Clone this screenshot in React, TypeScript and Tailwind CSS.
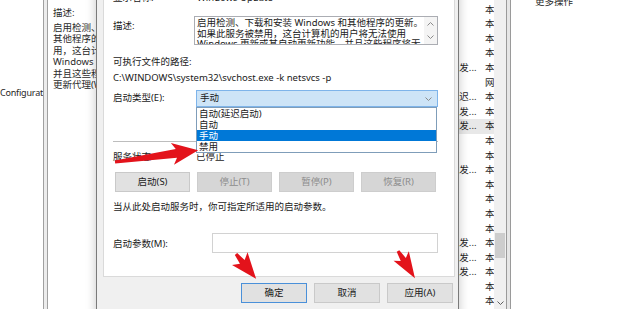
import React from "react"

// service list rows behind the dialog: [startup type, log on as, selected]
const rows: [string, string, boolean?][] = [
  ["手动", "本地系统"],
  ["手动", "本地系统"],
  ["自动", "本地系统"],
  ["手动", "本地系统"],
  ["手动", "本地系统"],
  ["手动(触发...", "本地系统"],
  ["手动", "网络服务"],
  ["自动(延迟...", "本地系统"],
  ["手动(触发...", "本地系统"],
  ["手动(触发...", "本地系统", true],
  ["手动", "本地系统"],
  ["手动", "本地系统"],
  ["手动(触发...", "本地系统"],
  ["自动", "本地系统"],
  ["手动", "本地系统"],
  ["手动", "本地系统"],
  ["自动", "本地系统"],
  ["手动(触发...", "本地系统"],
  ["手动(触发...", "本地系统"],
  ["手动(触发...", "本地系统"],
  ["手动", "本地系统"],
  ["手动", "本地系统"],
]

function WinButton({
  children,
  disabled,
  primary,
  className = "",
}: {
  children: React.ReactNode
  disabled?: boolean
  primary?: boolean
  className?: string
}) {
  const look = disabled
    ? "bg-[#d6d6d6] border-[#cdcdcd] text-[#8c8c8c]"
    : primary
      ? "bg-[#e1e1e1] border-[#4a90d9] text-[#1a1a1a]"
      : "bg-[#e1e1e1] border-[#c9c9c9] text-[#1a1a1a]"
  return (
    <div className={`flex h-[20px] items-center justify-center border text-[9.5px] ${look} ${className}`}>
      {children}
    </div>
  )
}

function arrow(L: number, h: number, hw: number, sw: number, tw: number) {
  return `0,${-tw} ${L - h + 4},${-sw} ${L - h},${-hw} ${L},0 ${L - h},${hw} ${L - h + 4},${sw} 0,${tw}`
}

export default function App() {
  return (
    <div className="relative h-[309px] w-[620px] overflow-hidden bg-white text-[#1e1e1e] font-[family-name:'Noto_Sans','Noto_Sans_CJK_SC',sans-serif]">
      {/* MMC window in the background */}
      <div className="flex h-full">
        <div className="w-[43px] shrink-0 overflow-hidden whitespace-nowrap pt-[86px] text-[9px] leading-[14px] tracking-[-0.2px]">
          Configuration
        </div>
        <div className="w-[5px] shrink-0 border-x border-[#a0a0a0] bg-[#ececec]" />

        <div className="w-[160px] shrink-0 overflow-hidden whitespace-nowrap pl-[5px] pt-[7px] text-[9.5px] leading-[11.4px] text-[#2a2a2a]">
          <div>描述:</div>
          <div className="mt-[3.6px]">启用检测、下载和安装 Windows 和</div>
          <div>其他程序的更新。如果此服务被禁</div>
          <div>用，这台计算机的用户将无法使用</div>
          <div>Windows 更新或其自动更新功能，</div>
          <div>并且这些程序将无法使用 Windows</div>
          <div>更新代理(WUA) API。</div>
        </div>

        <div className="-mt-[12px] w-[286px] shrink-0 text-[9.5px]">
          {rows.map(([start, logon, sel], i) => (
            <div key={i} className={`flex h-[14.6px] items-center leading-[14.6px] ${sel ? "bg-[#e8e8e8]" : ""}`}>
              <div className="w-[216px] shrink-0" />
              <div className="w-[59px] shrink-0 overflow-hidden whitespace-nowrap pl-[4px]">{start}</div>
              <div className="w-[11px] shrink-0 overflow-hidden whitespace-nowrap pl-[2px]">{logon}</div>
            </div>
          ))}
        </div>

        <div className="flex w-[12px] shrink-0 flex-col bg-[#f0f0f0]">
          <div className="h-[233px]" />
          <div className="mx-[1px] h-[25px] bg-[#cdcdcd]" />
          <div className="flex-1" />
          <div className="flex h-[8px] items-start justify-center">
            <svg width="7" height="4" viewBox="0 0 7 4">
              <path d="M0.5 0.5 L3.5 3.5 L6.5 0.5" fill="none" stroke="#606060" strokeWidth="1" />
            </svg>
          </div>
        </div>
        <div className="w-[5px] shrink-0 border-x border-[#9a9a9a] bg-[#e6e6e6]" />

        <div className="flex-1 pl-[24px]">
          <div className="-mt-[4px] text-[9.5px] leading-[12px] text-[#2a2a2a]">更多操作</div>
        </div>
      </div>

      {/* Windows Update properties dialog */}
      <div className="absolute left-[96px] top-[-24px] h-[345px] w-[363px] border-x border-[#7a7a7a] bg-[#f0f0f0] pl-[6px] pr-[3px] shadow-[0_0_10px_rgba(0,0,0,0.22)]">
        <div className="relative flex h-[301px] flex-col border border-[#dadada] bg-white pl-[9px] pr-[16px] text-[9.5px] text-[#1a1a1a]">
          <div className="mt-[14px] flex h-[14px] items-center whitespace-nowrap">
            <div className="w-[82px] shrink-0">显示名称:</div>
            <div className="pl-[2px]">Windows Update</div>
          </div>

          <div className="mt-[11px] flex">
            <div className="w-[81px] shrink-0 pt-[3px] leading-[14px]">描述:</div>
            <div className="flex h-[29px] flex-1 overflow-hidden border border-[#abadb3]">
              <div className="flex-1 overflow-hidden whitespace-nowrap pl-[2px] pt-[1px] leading-[10.5px]">
                <div>启用检测、下载和安装 Windows 和其他程序的更新。</div>
                <div>如果此服务被禁用，这台计算机的用户将无法使用</div>
                <div>Windows 更新或其自动更新功能，并且这些程序将无</div>
              </div>
              <div className="flex w-[13px] shrink-0 flex-col items-center justify-between bg-[#f4f4f4] py-[5px]">
                <svg width="7" height="4" viewBox="0 0 7 4">
                  <path d="M0.5 3.5 L3.5 0.5 L6.5 3.5" fill="none" stroke="#8a8a8a" strokeWidth="1" />
                </svg>
                <svg width="7" height="4" viewBox="0 0 7 4">
                  <path d="M0.5 0.5 L3.5 3.5 L6.5 0.5" fill="none" stroke="#8a8a8a" strokeWidth="1" />
                </svg>
              </div>
            </div>
          </div>

          <div className="mt-[10px] flex h-[14px] items-center">可执行文件的路径:</div>
          <div className="mt-[2px] flex h-[14px] items-center whitespace-nowrap">
            C:\WINDOWS\system32\svchost.exe -k netsvcs -p
          </div>

          <div className="mt-[5px] flex h-[17px] items-center">
            <div className="w-[83px] shrink-0">启动类型(E):</div>
            <div className="flex h-full flex-1 items-center justify-between border border-[#7eb4ea] bg-[#cde4f7] pl-[3px] pr-[5px]">
              <span>手动</span>
              <svg width="7" height="4" viewBox="0 0 7 4">
                <path d="M0.5 0.5 L3.5 3.5 L6.5 0.5" fill="none" stroke="#8a8a8a" strokeWidth="1" />
              </svg>
            </div>
          </div>

          <div className="mt-[34px] h-px bg-[#bdbdbd]" />

          <div className="mt-[8px] flex h-[14px] items-center">
            <div className="w-[83px] shrink-0">服务状态:</div>
            <div>已停止</div>
          </div>

          <div className="mt-[8px] flex gap-[7px] pl-[2px]">
            <WinButton className="w-[75px]">启动(S)</WinButton>
            <WinButton className="w-[75px]" disabled>停止(T)</WinButton>
            <WinButton className="w-[75px]" disabled>暂停(P)</WinButton>
            <WinButton className="w-[75px]" disabled>恢复(R)</WinButton>
          </div>

          <div className="mt-[8px] flex h-[14px] items-center whitespace-nowrap">
            当从此处启动服务时，你可指定所适用的启动参数。
          </div>

          <div className="mt-[19px] flex h-[20px] items-center">
            <div className="w-[99px] shrink-0 pt-[3px]">启动参数(M):</div>
            <div className="h-full flex-1 border border-[#d2d2d2] bg-white" />
          </div>

          {/* open dropdown of the startup type combo */}
          <div className="absolute left-[92px] top-[130px] w-[241px] border border-[#7f9db9] bg-white">
            <div className="h-[11px] pl-[2px] leading-[11px]">自动(延迟启动)</div>
            <div className="h-[11px] pl-[2px] leading-[11px]">自动</div>
            <div className="h-[11px] bg-[#0078d7] pl-[2px] leading-[11px] text-white">手动</div>
            <div className="h-[11px] pl-[2px] leading-[11px]">禁用</div>
          </div>
        </div>

        <div className="flex justify-end gap-[7px] pr-[2px] pt-[6px]">
          <WinButton className="w-[66px]" primary>确定</WinButton>
          <WinButton className="w-[66px]">取消</WinButton>
          <WinButton className="w-[66px]">应用(A)</WinButton>
        </div>
      </div>

      {/* red annotation arrows */}
      <svg className="pointer-events-none absolute inset-0" width="620" height="309" viewBox="0 0 620 309">
        <polygon points={arrow(84, 26, 11, 4.5, 1.5)} transform="translate(115 162) rotate(-8)" fill="#e3131b" />
        <polygon points={arrow(32, 26, 10, 3, 1.5)} transform="translate(236 254) rotate(51)" fill="#e3131b" />
        <polygon points={arrow(32, 26, 9, 3, 1.5)} transform="translate(398 251) rotate(58)" fill="#e3131b" />
      </svg>
    </div>
  )
}
